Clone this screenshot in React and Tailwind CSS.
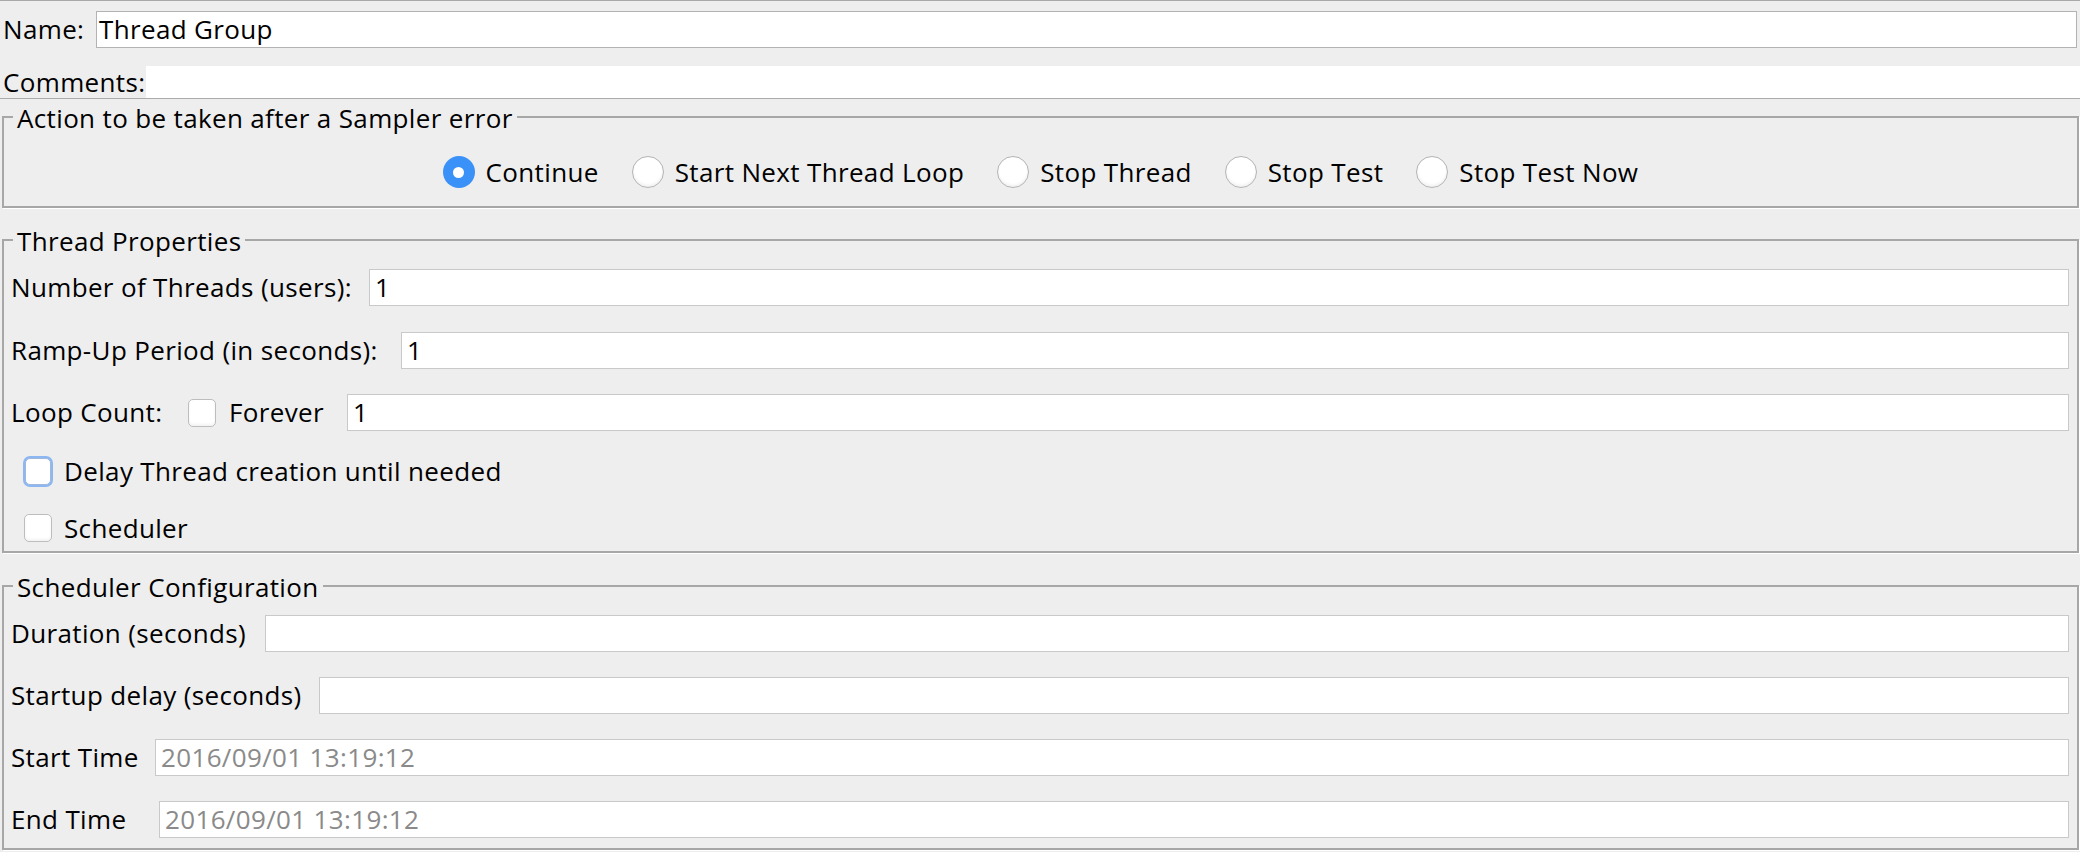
import React from 'react';

function Radio({ checked }) {
  if (checked) {
    return (
      <span className="w-[32px] h-[32px] shrink-0 rounded-full bg-[#3a92f8] flex items-center justify-center">
        <span className="w-[11px] h-[11px] rounded-full bg-white" />
      </span>
    );
  }
  return <span className="w-[32px] h-[32px] shrink-0 rounded-full bg-white border border-[#b3b3b3] shadow-[inset_0_-2px_3px_rgba(0,0,0,0.06)]" />;
}

function Check({ focus }) {
  if (focus) {
    return (
      <span className="w-[30px] h-[31px] shrink-0 rounded-[7px] bg-[#8db7f2] p-[2px] flex">
        <span className="flex-1 rounded-[5px] bg-white border border-[#9fb8dc]" />
      </span>
    );
  }
  return <span className="w-[28px] h-[28px] shrink-0 rounded-[5px] bg-white border border-[#bdbdbd] shadow-[inset_0_-2px_3px_rgba(0,0,0,0.05)]" />;
}

function Field({ value, muted }) {
  return (
    <div className={`flex-1 h-full bg-white border border-[#c9c9c9] pl-[5px] flex items-center ${muted ? 'text-[#8a8a8a]' : ''}`}>
      {value}
    </div>
  );
}

function Row({ label, width, value, muted, className = '' }) {
  return (
    <div className={`flex items-center h-[37px] ${className}`}>
      <span className={`shrink-0 whitespace-nowrap ${width}`}>{label}</span>
      <Field value={value} muted={muted} />
    </div>
  );
}

function Group({ title, className = '', children }) {
  return (
    <fieldset className={`ml-[2px] mr-[1px] border-2 border-[#a7a7a7] shadow-[1px_1px_0_#ffffff] ${className}`}>
      <legend className="ml-[9px] px-[4px] leading-[30px] translate-y-[1px]">{title}</legend>
      {children}
    </fieldset>
  );
}

export default function App() {
  const actions = ['Continue', 'Start Next Thread Loop', 'Stop Thread', 'Stop Test', 'Stop Test Now'];

  return (
    <div className="w-[2080px] h-[852px] overflow-hidden bg-[#eeeeee] border-t border-[#a9a9a9] text-black text-[26px] tracking-[0.35px] font-['Open_Sans',sans-serif]">
      {/* name + comments */}
      <div className="flex items-center h-[37px] mt-[10px] mr-[3px]">
        <span className="w-[96px] pl-[3px] shrink-0">Name:</span>
        <div className="flex-1 h-full bg-white border border-[#b3b3b3] pl-[2px] flex items-center">Thread Group</div>
      </div>
      <div className="flex items-center h-[33px] mt-[18px] border-b border-[#ababab]">
        <span className="w-[146px] pl-[3px] shrink-0">Comments:</span>
        <div className="flex-1 h-full bg-white" />
      </div>

      {/* sampler error */}
      <Group title="Action to be taken after a Sampler error" className="mt-[3px]">
        <div className="flex justify-center items-center h-[32px] mt-[24px] mb-[18px]">
          {actions.map((a, i) => (
            <div key={a} className={`flex items-center ${i > 0 ? 'ml-[33px]' : ''}`}>
              <Radio checked={i === 0} />
              <span className="ml-[11px] whitespace-nowrap">{a}</span>
            </div>
          ))}
        </div>
      </Group>

      {/* thread properties */}
      <Group title="Thread Properties" className="mt-[17px]">
        <div className="pl-[7px] pr-[8px] pt-[14px] pb-[9px]">
          <Row label="Number of Threads (users):" width="w-[358px]" value="1" />
          <Row label="Ramp-Up Period (in seconds):" width="w-[390px]" value="1" className="mt-[26px]" />
          <div className="flex items-center h-[37px] mt-[25px]">
            <span className="w-[177px] shrink-0">Loop Count:</span>
            <Check />
            <span className="w-[118px] ml-[13px] shrink-0">Forever</span>
            <Field value="1" />
          </div>
          <div className="flex items-center h-[31px] mt-[25px]">
            <span className="ml-[12px] flex"><Check focus /></span>
            <span className="ml-[11px]">Delay Thread creation until needed</span>
          </div>
          <div className="flex items-center h-[28px] mt-[27px]">
            <span className="ml-[13px] flex"><Check /></span>
            <span className="ml-[12px]">Scheduler</span>
          </div>
        </div>
      </Group>

      {/* scheduler */}
      <Group title="Scheduler Configuration" className="mt-[18px]">
        <div className="pl-[7px] pr-[8px] pt-[14px] pb-[10px]">
          <Row label="Duration (seconds)" width="w-[254px]" value="" />
          <Row label="Startup delay (seconds)" width="w-[308px]" value="" className="mt-[25px]" />
          <Row label="Start Time" width="w-[144px]" value="2016/09/01 13:19:12" muted className="mt-[25px]" />
          <Row label="End Time" width="w-[148px]" value="2016/09/01 13:19:12" muted className="mt-[25px]" />
        </div>
      </Group>
    </div>
  );
}
